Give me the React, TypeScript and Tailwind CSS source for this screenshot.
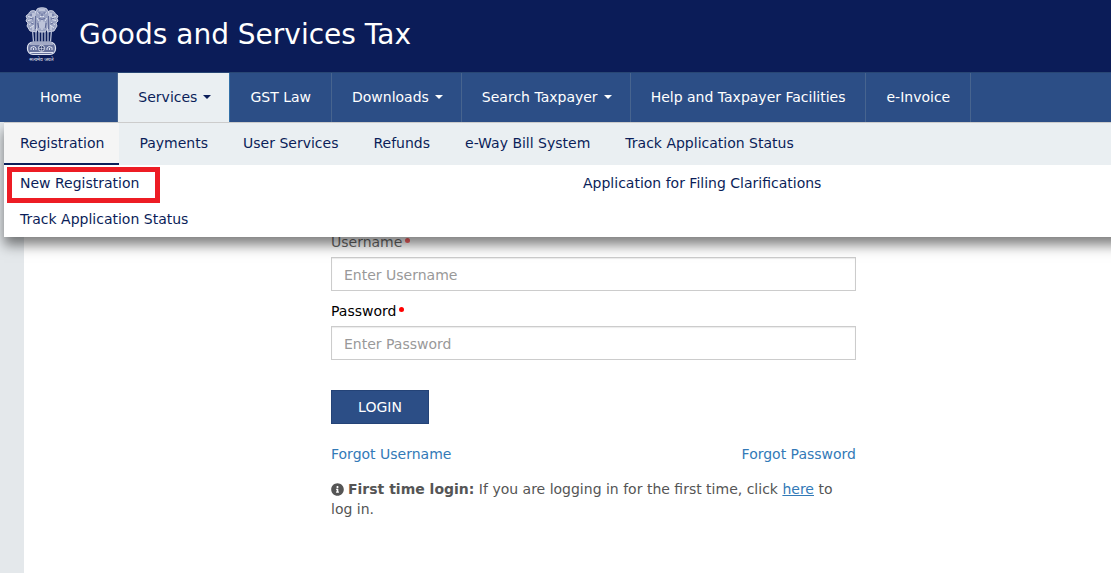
import { FaInfoCircle } from "react-icons/fa";

type NavItem = { label: string; caret?: boolean; active?: boolean; wide?: boolean };

const NAV_ITEMS: NavItem[] = [
  { label: "Home", wide: true },
  { label: "Services", caret: true, active: true },
  { label: "GST Law" },
  { label: "Downloads", caret: true },
  { label: "Search Taxpayer", caret: true },
  { label: "Help and Taxpayer Facilities" },
  { label: "e-Invoice" },
];

const SERVICE_TABS = [
  "Registration",
  "Payments",
  "User Services",
  "Refunds",
  "e-Way Bill System",
  "Track Application Status",
];

function Emblem() {
  return (
    <svg viewBox="0 0 34 56" className="h-14 w-[34px] shrink-0" role="img" aria-label="सत्यमेव जयते">
      {/* lions */}
      <g fill="#9ba4c3" stroke="#e8ebf5" strokeWidth="0.8">
        <path d="M11 4.500C8 2.500 4.500 4 4 6.500L1 9l1 2.500L1 14l2 2-1 3 3 5 6.500 1V12z" />
        <path d="M23 4.500c3-2 6.500-.5 7 2L33 9l-1 2.500L33 14l-2 2 1 3-3 5-6.500 1V12z" />
        <path d="M11.500 3.500C11.500 1.500 14 .8 17 .8s5.500.7 5.500 2.700c1.500 1.500 2 4 1.500 6.500L23 21l-3 4h-6l-3-4-1-11c-.5-2.500 0-5 1.500-6.500z" />
      </g>
      <g fill="none" stroke="#e8ebf5" strokeWidth="0.9">
        <path d="M12 5.500l2 1.500M22 5.500L20 7M15 9.500h4M14 3h6M12 11l2 3M22 11l-2 3M15 14.500v7M19 14.500v7M17 13v10M3 9.500l4 1M3 13.500l4-1M4 17.500l4-2M5 21l4-3M31 9.500l-4 1M31 13.500l-4-1M30 17.500l-4-2M29 21l-4-3M8 6v4M26 6v4M8 19v4M26 19v4" />
      </g>
      <g fill="none" stroke="#4d588a" strokeWidth="0.8">
        <path d="M13.500 6h2M18.500 6h2M17 6.500v3M14 11.500q3 1.800 6 0M12.800 16l1 5M21.200 16l-1 5M5 8h2M29 8h-2M5 11.500l3 .5M29 11.500l-3 .5M5.500 16l3 1M28.500 16l-3 1M10.500 9v13M23.500 9v13" />
      </g>
      {/* legs */}
      <path
        d="M7.500 23 8.500 34.500M11 24v10.500M14 24v10.500M17 24v10.500M20 24v10.500M23 24v10.500M26.500 23 25.500 34.500"
        fill="none"
        stroke="#b9c0d8"
        strokeWidth="1.3"
      />
      {/* abacus */}
      <rect x="2.500" y="35" width="28" height="12.500" rx="5.500" fill="#66719c" stroke="#dfe3f0" strokeWidth="1.2" />
      <g fill="none" stroke="#dfe3f0" strokeWidth="1">
        <path d="M5 37h23M5 45.500h23M6 43v-2.500l3-1 2 1.500v2M8.500 41v2M27 43v-2.500l-3-1-2 1.500v2M24.500 41v2" />
        <circle cx="16.500" cy="41.300" r="3" fill="#33406f" />
        <path d="M16.500 39v5M14 41.500h5" strokeWidth="0.6" />
      </g>
      <text x="16.500" y="54" textAnchor="middle" fontSize="5" fill="#e8ebf5" fontFamily="'Noto Sans', sans-serif">
        सत्यमेव जयते
      </text>
    </svg>
  );
}

function Caret() {
  return (
    <svg viewBox="0 0 8 4" className="h-1 w-2" fill="currentColor" aria-hidden="true">
      <path d="M0 0h8L4 4z" />
    </svg>
  );
}

function MainNav() {
  return (
    <nav className="relative z-20 flex h-[50px] border-t border-[#284674] bg-[#2c4e86] text-white">
      {NAV_ITEMS.map((item) => (
        <a
          key={item.label}
          href="#"
          className={`flex items-center border-r pb-0.5 whitespace-nowrap ${
            item.wide ? "pr-9 pl-10" : item.caret ? "gap-1.5 pr-[18px] pl-5" : "pr-5 pl-5"
          } ${item.active ? "border-[#3370a8] bg-[#eaeff2] text-[#0b1e59]" : "border-[#47648f]"}`}
        >
          {item.label}
          {item.caret && <Caret />}
        </a>
      ))}
    </nav>
  );
}

function ServicesMenu() {
  return (
    <div className="absolute top-0 -right-5 left-1 z-10 border-t border-[#ccc] bg-white text-[#0b1e59] shadow-[0_8px_12px_rgba(0,0,0,0.5)]">
      <div className="flex h-[42px] gap-1 bg-[#eaeff2]">
        {SERVICE_TABS.map((tab, index) => (
          <a
            key={tab}
            href="#"
            className={`py-2.5 pr-[15px] pl-4 whitespace-nowrap ${
              index === 0 ? "border-b-2 border-[#0b1e59] bg-[#f5f5f5]" : ""
            }`}
          >
            {tab}
          </a>
        ))}
      </div>
      <div className="grid h-[72px] grid-cols-[563px_1fr] grid-rows-2 pl-4 leading-9">
        <a href="#" className="relative">
          New Registration
          <span className="absolute top-0.5 -left-[13px] h-9 w-[153px] border-5 border-[#ed1c24]" />
        </a>
        <a href="#">Application for Filing Clarifications</a>
        <a href="#">Track Application Status</a>
      </div>
    </div>
  );
}

function Field({ id, label, type, faded }: { id: string; label: string; type: string; faded?: boolean }) {
  return (
    <div className="flex flex-col gap-[5px]">
      <label htmlFor={id} className={`flex items-center gap-[3px] ${faded ? "opacity-60" : ""}`}>
        {label}
        <span className="mb-1 h-[5px] w-[5px] rounded-full bg-[#f00]" />
      </label>
      <input
        id={id}
        type={type}
        placeholder={`Enter ${label}`}
        className="h-[34px] w-full border border-[#ccc] bg-white px-3 pt-0.5 shadow-[inset_0_1px_1px_rgba(0,0,0,0.08)] placeholder:text-[#999]"
      />
    </div>
  );
}

export default function App() {
  return (
    <div className="flex min-h-screen flex-col bg-[#e4e8eb] font-['DejaVu_Sans',Verdana,sans-serif] text-[14px] leading-5 text-black">
      <header className="flex h-[72px] items-center gap-5 bg-[#0b1c58] pb-0.5 pl-[25px]">
        <Emblem />
        <h1 className="text-[28px] text-white">Goods and Services Tax</h1>
      </header>
      <MainNav />

      <div className="relative flex flex-1 flex-col overflow-x-clip pl-6">
        <ServicesMenu />
        <main className="flex-1 bg-white pt-[110px] pb-12 pl-[52px]">
          <form className="mx-auto w-full max-w-[525px]" onSubmit={(event) => event.preventDefault()}>
            <div className="flex flex-col gap-2.5">
              <Field id="username" label="Username" type="text" faded />
              <Field id="password" label="Password" type="password" />
            </div>
            <button type="submit" className="mt-[30px] h-[34px] w-[98px] border border-[#244377] bg-[#2c4e86] text-white">
              LOGIN
            </button>
            <div className="mt-5 flex justify-between text-[#337ab7]">
              <a href="#">Forgot Username</a>
              <a href="#">Forgot Password</a>
            </div>
            <p className="mt-[15px] text-[#555]">
              <FaInfoCircle className="mr-1 inline h-[13px] w-[13px] align-[-2px]" />
              <strong>First time login:</strong> If you are logging in for the first time, click{" "}
              <a href="#" className="text-[#337ab7] underline">
                here
              </a>{" "}
              to
              <br />
              log in.
            </p>
          </form>
        </main>
      </div>
    </div>
  );
}
